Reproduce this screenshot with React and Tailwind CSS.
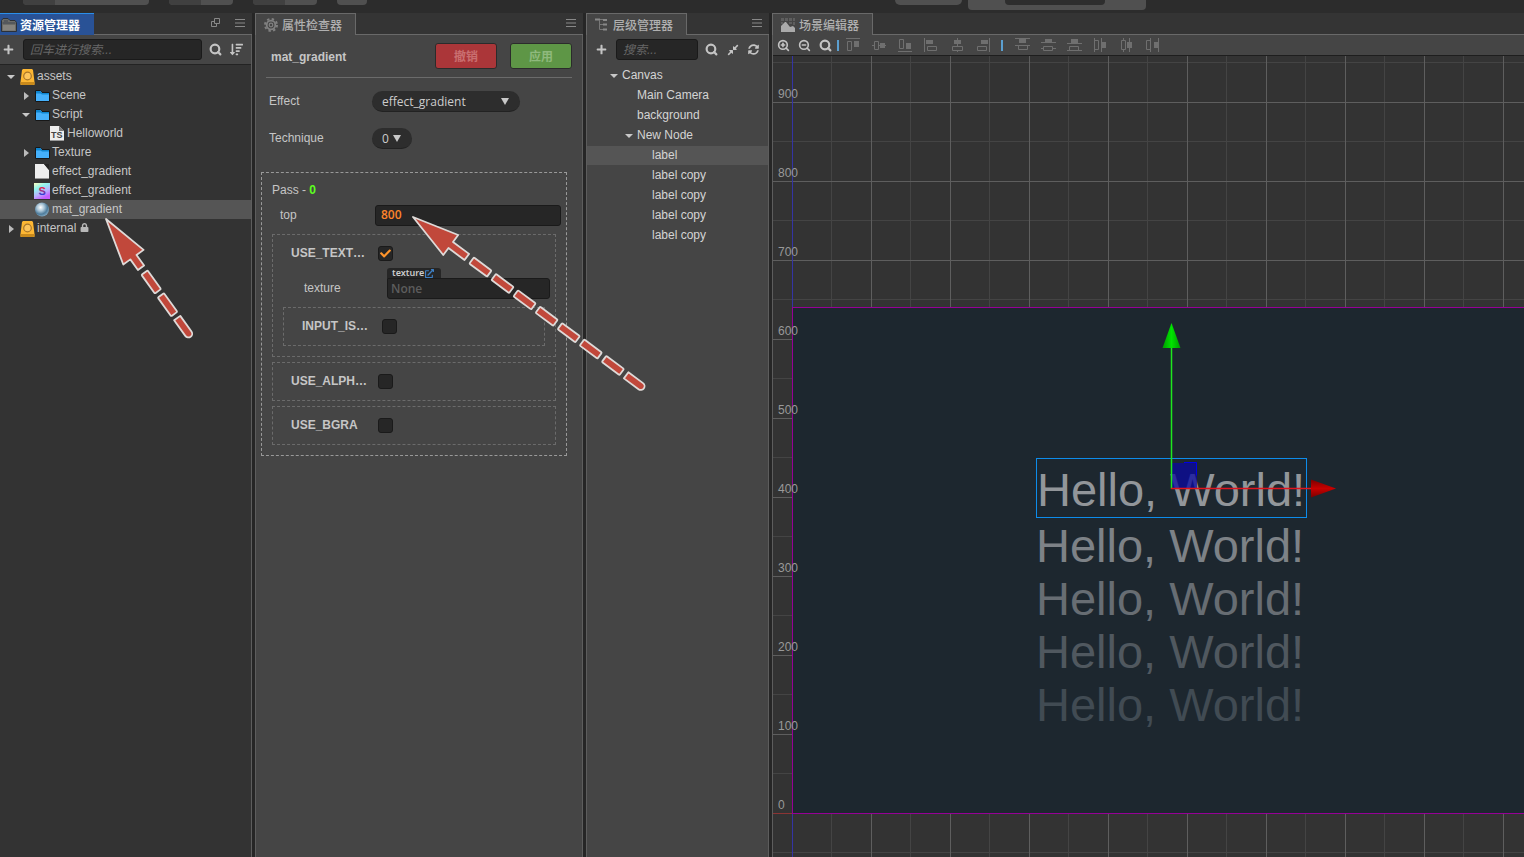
import { useState } from "react"
import { FaPlus, FaLock, FaCheck, FaExternalLinkAlt, FaCompressAlt, FaSyncAlt, FaSortAmountDown } from "react-icons/fa"
import { Search, ZoomIn, ZoomOut } from "lucide-react"

const assets = [
  { name: 'assets', depth: 0, icon: 'db', open: true },
  { name: 'Scene', depth: 1, icon: 'folder', open: false },
  { name: 'Script', depth: 1, icon: 'folder', open: true },
  { name: 'Helloworld', depth: 2, icon: 'ts' },
  { name: 'Texture', depth: 1, icon: 'folder', open: false },
  { name: 'effect_gradient', depth: 1, icon: 'file' },
  { name: 'effect_gradient', depth: 1, icon: 'effect' },
  { name: 'mat_gradient', depth: 1, icon: 'material' },
  { name: 'internal', depth: 0, icon: 'db', open: false, locked: true },
]

const nodes = [
  { name: 'Canvas', depth: 0, open: true },
  { name: 'Main Camera', depth: 1 },
  { name: 'background', depth: 1 },
  { name: 'New Node', depth: 1, open: true },
  { name: 'label', depth: 2 },
  { name: 'label copy', depth: 2 },
  { name: 'label copy', depth: 2 },
  { name: 'label copy', depth: 2 },
  { name: 'label copy', depth: 2 },
]

const Caret = ({ open }) => (
  <span className="flex w-3 shrink-0 items-center justify-center pt-[2px]">
    {open === true && <svg width="8" height="4" viewBox="0 0 8 4"><path d="M0 0h8L4 4z" fill="#c8c8c8" /></svg>}
    {open === false && <svg width="5" height="8" viewBox="0 0 5 8"><path d="M0 0v8l5-4z" fill="#bbb" /></svg>}
  </span>
)

const AssetIcon = ({ type }) => {
  if (type === 'db') return (
    <svg width="15" height="16" viewBox="0 0 15 16">
      <path d="M3 0h9l1 1 1.500 12v3H.5v-3L2 1z" fill="#fdb733" />
      <path d="M.5 13h14v1.500l-1 1.500h-12l-1-1.500z" fill="#c98a1c" />
      <circle cx="7.500" cy="7" r="3.800" fill="#fdc55c" stroke="#a8762a" strokeWidth="1.200" />
    </svg>
  )
  if (type === 'folder') return (
    <svg width="15" height="14" viewBox="0 0 15 14">
      <path d="M.5 1.500h5l1.500 2h7.500v9H.5z" fill="#45b0fb" stroke="#171717" />
      <path d="M1 2h4.200L6.700 4H14v1.500H7L5.500 4.500H1z" fill="#0f85cf" />
    </svg>
  )
  if (type === 'ts') return (
    <svg width="15" height="15" viewBox="0 0 15 15">
      <path d="M0 0h9l5 5v10H0z" fill="#eee" />
      <path d="M9 0v5h5z" fill="#777" />
      <path d="M0 14h14v1H0z" fill="#999" />
      <text x="1" y="12" fontSize="9" fontWeight="bold" fontFamily="Liberation Sans, sans-serif" fill="#444">TS</text>
    </svg>
  )
  if (type === 'file') return (
    <svg width="15" height="15" viewBox="0 0 15 15">
      <path d="M0 0h9l5 6v9H0z" fill="#eee" />
      <path d="M9 0h5v6z" fill="#252525" />
      <path d="M0 14h14v1H0z" fill="#999" />
    </svg>
  )
  if (type === 'effect') return (
    <svg width="16" height="16" viewBox="0 0 16 16">
      <defs>
        <linearGradient id="fx" x1="0" y1="0" x2="0.5" y2="1">
          <stop offset="0" stopColor="#fffcc0" />
          <stop offset="0.35" stopColor="#8ff5ee" />
          <stop offset="0.7" stopColor="#b9b0ff" />
          <stop offset="1" stopColor="#c55cff" />
        </linearGradient>
        <linearGradient id="fxs" x1="0" y1="0" x2="0" y2="1">
          <stop offset="0.3" stopColor="#e02050" />
          <stop offset="0.8" stopColor="#3040d8" />
        </linearGradient>
      </defs>
      <rect width="16" height="16" fill="url(#fx)" />
      <text x="4.500" y="12" fontSize="11" fontWeight="bold" fontFamily="Liberation Sans, sans-serif" fill="url(#fxs)">S</text>
    </svg>
  )
  return (
    <svg width="15" height="15" viewBox="0 0 15 15">
      <defs>
        <radialGradient id="ball" cx="0.4" cy="0.35" r="0.65">
          <stop offset="0" stopColor="#fff" />
          <stop offset="0.4" stopColor="#a9c4d6" />
          <stop offset="0.75" stopColor="#4d7b9b" />
          <stop offset="1" stopColor="#7ba3bd" />
        </radialGradient>
      </defs>
      <circle cx="7" cy="7.500" r="7" fill="url(#ball)" />
    </svg>
  )
}

const MenuIcon = () => (
  <svg width="10" height="8" viewBox="0 0 10 8"><path d="M0 .5h10M0 4h10M0 7.500h10" stroke="#888" /></svg>
)

const FolderTabIcon = () => (
  <svg width="16" height="15" viewBox="0 0 16 15">
    <path d="M.5 13.500V2.500l1.500-2h5l2 2h5l1.500 2v9z" fill="#6c6c68" stroke="#2b3038" />
    <path d="M1.500 5h13M3 3h4" stroke="#3e4450" />
    <path d="M2 7h12v5.500H2z" fill="#85837e" />
  </svg>
)

const GearIcon = () => (
  <svg width="14" height="14" viewBox="0 0 14 14">
    <circle cx="7" cy="7" r="6" fill="none" stroke="#808080" strokeWidth="2" strokeDasharray="2.360 2.352" />
    <circle cx="7" cy="7" r="4.300" fill="none" stroke="#808080" strokeWidth="1.800" />
    <circle cx="7" cy="7" r="1.800" fill="none" stroke="#808080" strokeWidth="1.200" />
  </svg>
)

const TreeTabIcon = () => (
  <svg width="14" height="14" viewBox="0 0 14 14">
    <path d="M0 .5h5v2H0zM8 1h4v2H8zM8 5.500h4v2H8zM8 10.500h4v2H8z" fill="#888" />
    <path d="M5 1.500h3M4.500 2v9.500H8M4.500 6.500H8" fill="none" stroke="#777" />
  </svg>
)

const SceneTabIcon = () => (
  <svg width="14" height="14" viewBox="0 0 14 14">
    <path d="M0 0h3v3H0zM4 0h3v3H4zM8 0h3v3H8zM12 0h2v3h-2zM8 4h3v2H8zM12 4h2v3h-2zM0 4h2v2H0z" fill="#5e5e5e" />
    <path d="M0 14V8l4-4h1l4 5 3-1 2 2v4z" fill="#aaa" />
  </svg>
)

const Panel = ({ title, icon, active, float, className, children }) => (
  <section className={`flex min-w-0 flex-col ${className}`}>
    <header className="flex h-[22px] shrink-0 bg-[#343434]">
      <button className={active
        ? "flex items-center gap-[3px] border-t border-[#2b8fea] bg-[#295296] pt-[2px] pr-[14px] pl-px text-xs font-bold text-white"
        : "flex items-center gap-1 border-t border-x border-[#696969] bg-[#454545] pt-[2px] pr-[13px] pl-2 text-xs font-medium text-[#b0b0b0]"}>
        <span className={active ? "" : "pb-[2px]"}>{icon}</span>
        {title}
      </button>
      <div className="flex flex-1 items-center justify-end gap-[15px] border-b border-[#696969] pr-[7px] pb-[2px]">
        {float && <svg width="9" height="9" viewBox="0 0 9 9"><path d="M3.500.5h5v5h-5zM3 3.500H.5v5h5V6" fill="none" stroke="#888" /></svg>}
        {title !== '场景编辑器' && <MenuIcon />}
      </div>
    </header>
    {children}
  </section>
)

const fieldCls = "h-[21px] rounded-[3px] border border-[#1a1a1a] bg-[#262626] outline-none"

const Pill = ({ id, value, width }) => (
  <div className={`relative h-[21px] ${width}`}>
    <select id={id} defaultValue={value} className="h-full w-full appearance-none rounded-full border-b border-[#222] bg-[#2d2d2d] pt-[2px] pl-[10px] font-['Open_Sans',sans-serif] text-xs text-[#ccc] outline-none">
      <option>{value}</option>
    </select>
    <svg className="pointer-events-none absolute top-[7px] right-[11px]" width="8" height="7" viewBox="0 0 8 7"><path d="M0 0h8L4 7z" fill="#c8c8c8" /></svg>
  </div>
)

const Check = ({ id, on }) => {
  const [checked, setChecked] = useState(on)
  return (
    <span className="relative flex">
      <input id={id} type="checkbox" checked={checked} onChange={() => setChecked(!checked)} className="h-[15px] w-[15px] appearance-none rounded-[3px] border border-[#1a1a1a] bg-[#262626]" />
      {checked && <FaCheck size={11} className="pointer-events-none absolute top-[2px] left-[2px] text-[#fd942b]" />}
    </span>
  )
}

const MacroRow = ({ name, label, on, className }) => (
  <div className={`flex items-center pl-[18px] ${className}`}>
    <label htmlFor={name} className={`pb-px font-bold ${label}`}>{name}</label>
    <Check id={name} on={on} />
  </div>
)

const Assets = () => (
  <Panel title="资源管理器" icon={<FolderTabIcon />} active float className="w-[252px] shrink-0">
    <div className="flex flex-1 flex-col border-r border-[#5d5d5d] bg-[#333]">
      <div className="flex h-[30px] items-center border-b border-[#232323] bg-[#454545] pr-2 pl-[3px] text-[#c4c4c4]">
        <button aria-label="create"><FaPlus size={11} /></button>
        <input aria-label="search assets" placeholder="回车进行搜索..." className={`ml-[9px] min-w-0 flex-1 px-[6px] text-xs italic placeholder:text-[#666] ${fieldCls}`} />
        <button aria-label="search" className="ml-[7px]"><Search size={13} strokeWidth={4} /></button>
        <button aria-label="sort" className="ml-2"><FaSortAmountDown size={13} /></button>
      </div>
      <ul className="pt-[2px]">
        {assets.map((item, index) => (
          <li key={index} className={`flex h-[19px] items-center pb-[2px] ${item.name === 'mat_gradient' ? 'bg-[#555]' : ''}`} style={{ paddingLeft: 5 + item.depth * 15 }}>
            <Caret open={item.open} />
            <span className={item.icon === 'effect' ? "mr-[2px] ml-[2px] flex w-[16px] pt-[2px]" : "mr-[2px] ml-[3px] flex w-[15px] pt-[2px]"}><AssetIcon type={item.icon} /></span>
            {item.name}
            {item.locked && <FaLock size={9} className="ml-1 text-[#b8b8b8]" />}
          </li>
        ))}
      </ul>
    </div>
  </Panel>
)

const Inspector = () => (
  <Panel title="属性检查器" icon={<GearIcon />} className="w-[328px] shrink-0">
    <div className="flex-1 border-x border-[#5d5d5d] bg-[#454545]">
      <div className="mx-[10px] flex h-[43px] items-center border-b border-[#6b6b6b] pl-[5px]">
        <h2 className="flex-1 pt-[2px] font-bold">mat_gradient</h2>
        <button className="h-[26px] w-[62px] rounded-[3px] border border-[#2b2b2b] bg-[#ab3639] pt-[2px] font-bold text-[#c96f70]">撤销</button>
        <button className="ml-[13px] h-[26px] w-[62px] rounded-[3px] border border-[#2b2b2b] bg-[#5e9646] pt-[2px] font-bold text-[#8fb97d]">应用</button>
      </div>
      <div className="flex flex-col gap-4 pt-[13px] pl-[13px]">
        <div className="flex items-center">
          <label htmlFor="effect" className="w-[103px] pb-[2px]">Effect</label>
          <Pill id="effect" value="effect_gradient" width="w-[148px]" />
        </div>
        <div className="flex items-center">
          <label htmlFor="technique" className="w-[103px] pb-[2px]">Technique</label>
          <Pill id="technique" value="0" width="w-[40px]" />
        </div>
      </div>
      <div className="mt-[23px] mr-[15px] ml-[5px] flex flex-col border border-dashed border-[#999] pr-[5px] pb-[10px] pl-[10px]">
        <p className="flex h-8 items-center pt-[2px] whitespace-pre">Pass - <b className="text-[#5dff1e]">0</b></p>
        <div className="mb-2 flex items-center pl-2">
          <label htmlFor="top" className="w-[95px] pb-[2px]">top</label>
          <input id="top" defaultValue="800" className={`min-w-0 flex-1 px-[5px] pb-[2px] font-['Open_Sans',sans-serif] text-xs font-semibold text-[#fd842b] ${fieldCls}`} />
        </div>
        <div className="mr-[5px] flex flex-col gap-[5px]">
          <div className="border border-dashed border-[#6b6b6b] pb-[10px]">
            <MacroRow name="USE_TEXT…" label="w-[87px]" on={true} className="h-[33px] pt-[3px]" />
            <div className="mb-2 flex items-end pr-[5px] pl-[31px]">
              <label htmlFor="texture" className="flex h-[21px] w-[83px] items-center pb-[2px]">texture</label>
              <div className="flex flex-1 flex-col">
                <span className="flex h-[10px] w-[54px] items-center gap-px rounded-t-[3px] bg-[#262626] pl-[5px] font-['Noto_Sans',sans-serif] text-[9px] font-semibold text-[#ccc]">texture<FaExternalLinkAlt size={9} className="shrink-0 text-[#3d7fc4]" /></span>
                <input id="texture" placeholder="None" className={`w-full rounded-tl-none px-[3px] font-['Open_Sans',sans-serif] text-xs font-semibold placeholder:text-[#5d5d5d] ${fieldCls}`} />
              </div>
            </div>
            <div className="mx-[10px] border border-dashed border-[#6b6b6b]">
              <MacroRow name="INPUT_IS…" label="w-[80px]" on={false} className="h-[37px]" />
            </div>
          </div>
          <div className="border border-dashed border-[#6b6b6b]">
            <MacroRow name="USE_ALPH…" label="w-[87px]" on={false} className="h-[37px]" />
          </div>
          <div className="border border-dashed border-[#6b6b6b]">
            <MacroRow name="USE_BGRA" label="w-[87px]" on={false} className="h-[37px]" />
          </div>
        </div>
      </div>
    </div>
  </Panel>
)

const Hierarchy = () => (
  <Panel title="层级管理器" icon={<TreeTabIcon />} className="w-[183px] shrink-0">
    <div className="flex-1 border-x border-[#5d5d5d] bg-[#454545]">
      <div className="flex h-[29px] items-center pr-[9px] pl-[9px] text-[#c4c4c4]">
        <button aria-label="create node"><FaPlus size={11} /></button>
        <input aria-label="search nodes" placeholder="搜索..." className={`mr-[7px] ml-[9px] min-w-0 flex-1 px-[6px] text-xs italic placeholder:text-[#666] ${fieldCls}`} />
        <div className="flex items-center gap-[9px]">
          <button aria-label="search"><Search size={13} strokeWidth={4} /></button>
          <button aria-label="collapse"><FaCompressAlt size={12} /></button>
          <button aria-label="refresh"><FaSyncAlt size={11} /></button>
        </div>
      </div>
      <ul className="pt-px text-[#d4d4d4]">
        {nodes.map((item, index) => (
          <li key={index} className={`mt-px flex h-[19px] items-center gap-[2px] pb-[2px] ${item.name === 'label' ? 'bg-[#555]' : ''}`} style={{ paddingLeft: 21 + item.depth * 15 }}>
            <Caret open={item.open} />
            {item.name}
          </li>
        ))}
      </ul>
    </div>
  </Panel>
)

// guide line, outlined box and filled box for each align / distribute tool
const alignTools = [
  ['M0 .5h14', 'M1.500 3.500h4v9h-4z', 'M8 3h5v6H8z'],
  ['M0 7.500h2M6 7.500h8', 'M2.500 3.500h4v8h-4z', 'M8 5h5v5H8z'],
  ['M0 13.500h14', 'M1.500 1.500h4v9h-4z', 'M8 5h5v6H8z'],
  ['M.5 0v14', 'M3.500 8.500h9v4h-9z', 'M2 2h7v4H2z'],
  ['M7.500 0v8M7.500 13v1', 'M2.500 8.500h10v4h-10z', 'M4 2h7v4H4z'],
  ['M13.500 0v14', 'M1.500 8.500h9v4h-9z', 'M5 2h7v4H5z'],
]
const spreadTools = [
  ['M0 .5h15M0 7.500h15', 'M3.500 7.500h9v4h-9z', 'M4 1h7v4H4z'],
  ['M0 4.500h15M0 10.500h3M12 10.500h3', 'M2.500 8.500h9v4h-9z', 'M4 1h7v4H4z'],
  ['M0 5.500h15M0 12.500h15', 'M2.500 8.500h9v4h-9z', 'M4 1h7v4H4z'],
  ['M1.500 0v14M8.500 0v14', 'M1.500 2.500h4v9h-4z', 'M9 4h4v6H9z'],
  ['M4.500 0v2M4.500 12v2M10.500 0v14', 'M2.500 2.500h4v9h-4z', 'M8 4h5v6H8z'],
  ['M5.500 0v14M13.500 0v14', 'M1.500 2.500h4v9h-4z', 'M9 4h4v6H9z'],
]

const ToolGroup = ({ tools }) => (
  <div className="flex gap-[11px]">
    {tools.map(([guide, outline, solid], i) => (
      <button key={i} aria-label="align">
        <svg width="15" height="14" viewBox="0 0 15 14">
          <path d={guide} stroke="#6f6f6f" />
          <path d={outline} fill="none" stroke="#6f6f6f" />
          <path d={solid} fill="#6f6f6f" />
        </svg>
      </button>
    ))}
  </div>
)

const rulers = [900, 800, 700, 600, 500, 400, 300, 200, 100, 0]

const Scene = () => (
  <Panel title="场景编辑器" icon={<SceneTabIcon />} className="flex-1">
    <div className="flex flex-1 flex-col border-l border-[#5d5d5d]">
      <div className="flex h-[21px] shrink-0 items-center border-b border-[#1e1e1e] bg-[#454545] pl-1 text-[#c4c4c4]">
        <div className="flex gap-2">
          <button aria-label="zoom in"><ZoomIn size={13} strokeWidth={3} /></button>
          <button aria-label="zoom out"><ZoomOut size={13} strokeWidth={3} /></button>
          <button aria-label="zoom reset"><Search size={13} strokeWidth={4} /></button>
        </div>
        <i className="mr-[7px] ml-[5px] h-[11px] w-[2px] bg-[#5b9fd0]" />
        <ToolGroup tools={alignTools} />
        <i className="mr-3 ml-[10px] h-[11px] w-[2px] bg-[#5b9fd0]" />
        <ToolGroup tools={spreadTools} />
      </div>
      <div className="relative flex-1 overflow-hidden bg-[#333]">
        <svg className="absolute inset-0 h-full w-full">
          <defs>
            <pattern id="grid" x="19" y="757" width="79" height="79" patternUnits="userSpaceOnUse">
              <path d="M39.500 0v79M0 39.500h79" stroke="#444" />
              <path d="M.5 0v79M0 .5h79" stroke="#5e5e5e" />
            </pattern>
          </defs>
          <rect width="100%" height="100%" fill="url(#grid)" />
          <rect x="19" width="1" height="100%" fill="#3434a4" />
          <rect y="757" width="20" height="1" fill="#8c3434" />
          <rect x="19.500" y="251.500" width="100%" height="506" fill="#1d272f" stroke="#960096" />
          {rulers.map((n, i) => (
            <text key={n} x="5" y={42 + i * 79} fontSize="12" fontFamily="Liberation Sans, sans-serif" fill="#999">{n}</text>
          ))}
        </svg>
        <div className="absolute top-[402px] left-[263px] flex w-[271px] flex-col text-[47px] leading-[53px] whitespace-nowrap">
          <p className="mb-px h-[60px] border border-[#0d8ceb] pt-1 text-[#92969a]">Hello, World!</p>
          <p className="text-[#7d8287]">Hello, World!</p>
          <p className="text-[#676d73]">Hello, World!</p>
          <p className="text-[#50585f]">Hello, World!</p>
          <p className="text-[#414b53]">Hello, World!</p>
        </div>
        <svg className="absolute top-[266px] left-[388px]" width="180" height="180" viewBox="0 0 180 180">
          <defs>
            <linearGradient id="up"><stop offset="0" stopColor="#009a00" /><stop offset="0.5" stopColor="#00e400" /><stop offset="1" stopColor="#009a00" /></linearGradient>
            <linearGradient id="side" x1="0" y1="0" x2="0" y2="1"><stop offset="0" stopColor="#7a0000" /><stop offset="0.5" stopColor="#c80000" /><stop offset="1" stopColor="#7a0000" /></linearGradient>
          </defs>
          <rect x="11" y="141" width="25" height="25" fill="#0a0aa0" fillOpacity="0.75" />
          <path d="M23 140.500h12.500v13" fill="none" stroke="#0000e6" />
          <path d="M10.500 26v141" stroke="#1ee81e" strokeWidth="1.500" />
          <path d="M10 166.500h141" stroke="#e0141e" strokeWidth="1.500" />
          <path d="M10.500 1l9 25h-18z" fill="url(#up)" />
          <path d="M175 166.500l-25 9v-18z" fill="url(#side)" />
        </svg>
      </div>
    </div>
  </Panel>
)

// red callout arrow, drawn along +x from its tip then rotated
const Arrow = ({ x, y, angle, stem, start, step, size, count }) => (
  <g transform={`translate(${x} ${y}) rotate(${angle})`} fill="#c1483b" stroke="#dedad8" strokeWidth="1.800" strokeLinejoin="round">
    <path d={`M0 0L47 -12.500V-3.800H${stem}V3.800H47V12.500z`} />
    {Array.from({ length: count }).map((_, i) => {
      const a = start + i * step
      const b = a + size
      return i === count - 1
        ? <path key={i} d={`M${a} -3.800H${b - 3.8}a3.800 3.800 0 0 1 0 7.600H${a}z`} />
        : <rect key={i} x={a} y="-3.800" width={size} height="7.600" rx="1" />
    })}
  </g>
)

const TopBar = () => (
  <div className="flex h-[13px] shrink-0 items-start overflow-hidden bg-[#2c2c2c]">
    <div className="ml-[23px] flex h-[5px] w-[126px] shrink-0 overflow-hidden rounded-b-[4px] bg-[#505050]"><i className="w-8 bg-[#404040]" /></div>
    <div className="ml-5 flex h-[5px] w-16 shrink-0 overflow-hidden rounded-b-[4px] bg-[#505050]"><i className="w-8 bg-[#404040]" /></div>
    <div className="ml-5 flex h-[5px] w-16 shrink-0 overflow-hidden rounded-b-[4px] bg-[#505050]"><i className="w-8 bg-[#404040]" /></div>
    <div className="ml-5 h-[5px] w-[30px] shrink-0 rounded-b-[4px] bg-[#505050]" />
    <div className="ml-[528px] h-[5px] w-[67px] shrink-0 rounded-b-full bg-[#505050]" />
    <div className="ml-[6px] flex h-[10px] w-[178px] shrink-0 justify-center rounded-b-[4px] bg-[#505050] pr-1">
      <i className="h-[5px] w-[100px] rounded-b-[4px] bg-[#2e2e2e]" />
    </div>
  </div>
)

const App = () => {
  return (
    <div className="relative flex h-screen w-full flex-col overflow-hidden bg-[#262626] font-['Liberation_Sans','Noto_Sans_CJK_SC',sans-serif] text-xs text-[#c6c6c6]">
      <TopBar />
      <main className="flex min-h-0 flex-1 gap-[3px]">
        <Assets />
        <Inspector />
        <Hierarchy />
        <Scene />
      </main>
      <svg className="pointer-events-none absolute inset-0 h-full w-full">
        <Arrow x={106} y={219} angle={54.3} stem={60} start={66} step={28} size={23} count={3} />
        <Arrow x={413} y={217} angle={36.6} stem={67} start={73} step={27.5} size={22} count={8} />
      </svg>
    </div>
  )
}

export default App
